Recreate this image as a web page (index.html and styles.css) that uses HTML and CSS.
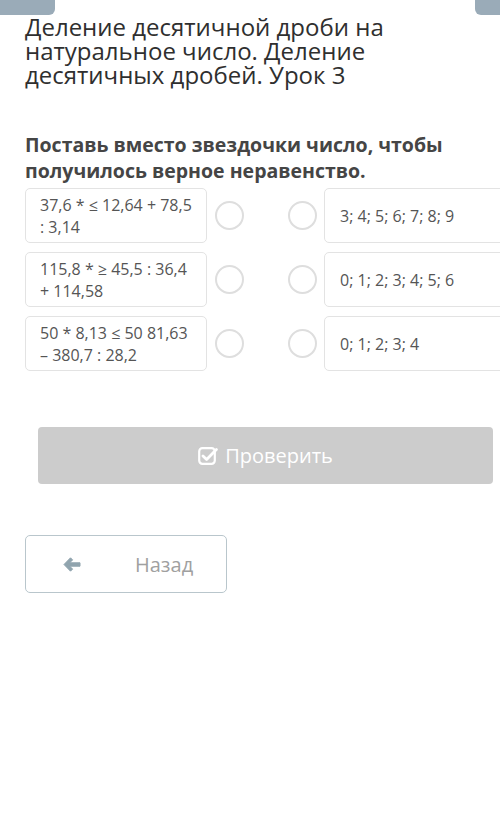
FILE: index.html
```html
<!DOCTYPE html>
<html lang="ru">
<head>
  <meta charset="UTF-8">
  <title>Деление десятичных дробей</title>
  <link rel="stylesheet" href="styles.css">
</head>
<body>
<div class="topbar">
  <span class="tab tab-left"></span>
  <span class="tab tab-right"></span>
</div>
<main>
  <h1>Деление десятичной дроби на натуральное число. Деление десятичных дробей. Урок 3</h1>
  <p class="task">Поставь вместо звездочки число, чтобы получилось верное неравенство.</p>

  <div class="pairs">
    <div class="pair-row">
      <div class="card left">37,6 * ≤ 12,64 + 78,5 : 3,14</div>
      <span class="dot first"></span>
      <span class="dot second"></span>
      <div class="card right">3; 4; 5; 6; 7; 8; 9</div>
    </div>
    <div class="pair-row">
      <div class="card left">115,8 * ≥ 45,5 : 36,4 + 114,58</div>
      <span class="dot first"></span>
      <span class="dot second"></span>
      <div class="card right">0; 1; 2; 3; 4; 5; 6</div>
    </div>
    <div class="pair-row">
      <div class="card left">50 * 8,13 ≤ 50 81,63 – 380,7 : 28,2</div>
      <span class="dot first"></span>
      <span class="dot second"></span>
      <div class="card right">0; 1; 2; 3; 4</div>
    </div>
  </div>

  <button class="check-btn" disabled>
    <svg width="20" height="19" viewBox="0 0 20 19">
      <rect x="1.2" y="2.2" width="15.6" height="15.6" rx="3.2" fill="none" stroke="#fff" stroke-width="2.2"/>
      <path d="M5 10 L8.6 13.4 L18.4 3.6" fill="none" stroke="#fff" stroke-width="2.8" stroke-linecap="round" stroke-linejoin="round"/>
    </svg>
    Проверить
  </button>

  <button class="back-btn">
    <svg width="18" height="15" viewBox="0 0 18 15">
      <path d="M7.5 0.8 L1 7.5 L7.5 14.2 L9.6 12.1 L6.7 9.2 H17 V5.8 H6.7 L9.6 2.9 Z" fill="#90a4ae" stroke="#90a4ae" stroke-width="1" stroke-linejoin="round"/>
    </svg>
    <span>Назад</span>
  </button>
</main>
</body>
</html>
```

FILE: styles.css
```css
body {
  margin: 0;
  background: #fff;
  color: #333;
  font-family: 'Open Sans', 'Noto Sans', sans-serif;
  overflow-x: hidden;
}
.topbar {
  display: flex;
  justify-content: space-between;
  height: 15px;
}
.tab {
  display: block;
  background: #9aabb8;
}
.tab-left {
  width: 55px;
  border-bottom-right-radius: 6px;
}
.tab-right {
  width: 25px;
  border-bottom-left-radius: 6px;
}
main {
  padding-left: 25px;
}
h1 {
  margin: 0;
  width: 455px;
  font-size: 24px;
  font-weight: normal;
  line-height: 24px;
  color: #2f2f2f;
}
.task {
  margin: 45px 0 0;
  width: 455px;
  font-size: 19.5px;
  font-weight: bold;
  line-height: 26px;
  color: #454545;
}
.pairs {
  display: flex;
  flex-direction: column;
  gap: 9px;
  margin-top: 4px;
}
.pair-row {
  display: flex;
  align-items: center;
  height: 55px;
}
.card {
  flex-shrink: 0;
  box-sizing: border-box;
  height: 55px;
  border: 1px solid #e3e3e3;
  border-radius: 5px;
  font-size: 16px;
  line-height: 22px;
  color: #555;
  display: flex;
  align-items: center;
}
.card.left {
  width: 182px;
  padding: 0 8px 0 14px;
}
.card.right {
  width: 200px;
  padding-left: 15px;
}
.dot {
  flex-shrink: 0;
  box-sizing: border-box;
  width: 29px;
  height: 29px;
  border: 2px solid #dedede;
  border-radius: 50%;
}
.dot.first {
  margin-left: 8px;
}
.dot.second {
  margin-left: 44px;
  margin-right: 7px;
}
button {
  font-family: inherit;
  cursor: pointer;
}
.check-btn {
  display: flex;
  align-items: center;
  justify-content: center;
  gap: 7px;
  width: 455px;
  height: 57px;
  margin: 56px 0 0 13px;
  border: none;
  border-radius: 4px;
  background: #cccccc;
  color: #fff;
  font-size: 20px;
}
.back-btn {
  display: flex;
  align-items: center;
  width: 202px;
  height: 58px;
  margin-top: 51px;
  padding: 0 0 0 37px;
  border: 1px solid #b9c6cc;
  border-radius: 5px;
  background: #fff;
  color: #a0a0a0;
  font-size: 20px;
}
.back-btn span {
  margin-left: 54px;
}
```
